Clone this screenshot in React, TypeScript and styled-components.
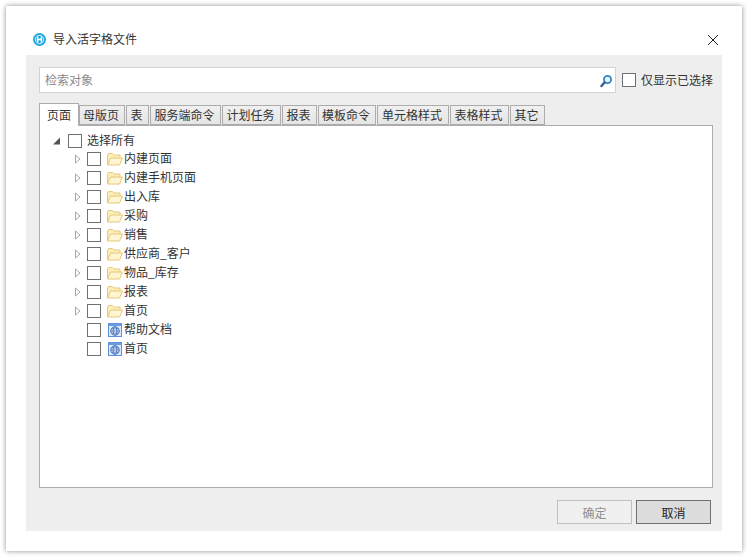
import React from 'react'
import styled, { createGlobalStyle } from 'styled-components'

const Global = createGlobalStyle`
  html, body {
    margin: 0;
    padding: 0;
    background: #fff;
  }
  body {
    font-family: "Noto Sans CJK SC", "Liberation Sans", sans-serif;
    font-size: 12px;
    color: #333;
  }
`
const Page = styled.div`
  width: 748px;
  height: 557px;
  padding: 6px;
  box-sizing: border-box;
  overflow: hidden;
`
const Dialog = styled.div`
  width: 736px;
  height: 545px;
  background: #fff;
  box-shadow: 0 0 5px rgba(0, 0, 0, 0.45);
  padding: 0 20px 20px;
  box-sizing: border-box;
  display: flex;
  flex-direction: column;
`
const TitleBar = styled.div`
  height: 49px;
  display: flex;
  align-items: center;
  padding: 18px 0 0 7px;
  box-sizing: border-box;
`
const Title = styled.div`
  margin: 0 0 2px 7px;
  line-height: 16px;
`
const Close = styled.div`
  margin-left: auto;
  margin-right: 3px;
  width: 12px;
  height: 12px;
  display: flex;
`
const Panel = styled.div`
  flex: 1;
  background: #eeeeee;
  padding: 12px 9px 7px 13px;
  display: flex;
  flex-direction: column;
`
const SearchRow = styled.div`
  display: flex;
  align-items: center;
  height: 26px;
`
const Search = styled.div`
  width: 577px;
  height: 26px;
  box-sizing: border-box;
  background: #fff;
  border: 1px solid #cfd3d3;
  display: flex;
  align-items: center;
  padding: 0 1px 0 5px;
  color: #8a8a8a;
`
const SearchIcon = styled.div`
  margin-left: auto;
  width: 15px;
  height: 15px;
  display: flex;
`
const Box = styled.div<{ $gap?: number }>`
  width: 14px;
  height: 14px;
  box-sizing: border-box;
  background: #fff;
  border: 1px solid #707070;
  flex: none;
  margin-right: ${(p) => p.$gap ?? 0}px;
`
const Label = styled.span`
  margin-bottom: 2px;
`
const OnlySelected = styled.div`
  display: flex;
  align-items: center;
  margin-left: 6px;
`
const Tabs = styled.div`
  display: flex;
  height: 20px;
  margin-top: 12px;
  align-items: flex-end;
  position: relative;
  z-index: 1;
`
const Tab = styled.div<{ $w: number; $active?: boolean }>`
  width: ${(p) => p.$w}px;
  height: ${(p) => (p.$active ? 23 : 20)}px;
  margin-bottom: ${(p) => (p.$active ? -1 : 0)}px;
  margin-right: ${(p) => (p.$active ? 0 : 1)}px;
  padding-right: ${(p) => (p.$active ? 0 : 2)}px;
  box-sizing: border-box;
  border: 1px solid #acacac;
  border-bottom: ${(p) => (p.$active ? 'none' : '1px solid #acacac')};
  background: ${(p) => (p.$active ? '#fff' : 'linear-gradient(#f0f0f0, #e5e5e5)')};
  text-align: center;
  line-height: ${(p) => (p.$active ? 21 : 18)}px;
  color: #333;
`
const TreeBox = styled.div`
  width: 674px;
  height: 363px;
  box-sizing: border-box;
  background: #fff;
  border: 1px solid #acacac;
  padding: 5px 0 0 12px;
`
const Children = styled.div`
  margin-top: -1px;
`
const Row = styled.div<{ $level: number }>`
  height: 19px;
  display: flex;
  align-items: center;
  padding-left: ${(p) => p.$level * 19}px;
`
const Arrow = styled.div`
  width: 16px;
  flex: none;
  display: flex;
  padding-left: 1px;
  box-sizing: border-box;
`
const Icon = styled.div`
  width: 16px;
  height: 16px;
  margin: 0 1px 0 6px;
  flex: none;
  display: flex;
`
const Footer = styled.div`
  margin-top: 12px;
  display: flex;
  justify-content: flex-end;
  gap: 4px;
  padding-right: 2px;
`
const Button = styled.div<{ $disabled?: boolean }>`
  width: 75px;
  height: 24px;
  box-sizing: border-box;
  text-align: center;
  line-height: 23px;
  border: 1px solid ${(p) => (p.$disabled ? '#bfbfbf' : '#707070')};
  background: ${(p) => (p.$disabled ? '#f0f0f0' : '#dcdcdc')};
  color: ${(p) => (p.$disabled ? '#8f8f8f' : '#222')};
`

const FolderIcon = () => (
  <svg width="16" height="16" viewBox="0 0 16 16">
    <path d="M0.5 14V4L1.5 2.5H5.5L7 4H13V7" fill="#fdeeb8" stroke="#e6c878" />
    <path d="M0.5 14L3.5 7H15.5L12.5 14Z" fill="#fff5d2" stroke="#e6c878" />
  </svg>
)

const PageIcon = () => (
  <svg width="16" height="16" viewBox="0 0 16 16">
    <rect x="1.5" y="1.5" width="13" height="13" fill="#dce9fb" stroke="#5f90de" />
    <rect x="2" y="2" width="12" height="2" fill="#6c9be2" />
    <circle cx="8" cy="9" r="4.2" fill="#f4f8fe" stroke="#3b68b5" />
    <ellipse cx="8" cy="9" rx="1.9" ry="4.2" fill="none" stroke="#3b68b5" strokeWidth="0.8" />
    <path d="M3.8 9H12.2M4.6 6.9H11.4M4.6 11.1H11.4" stroke="#3b68b5" strokeWidth="0.8" fill="none" />
  </svg>
)

const OpenArrow = () => (
  <svg width="8" height="8" viewBox="0 0 8 8">
    <path d="M0 7.5H7V0.5Z" fill="#555" />
  </svg>
)

const ClosedArrow = () => (
  <svg width="9" height="10" viewBox="0 0 9 10">
    <path d="M3.5 1L8 5L3.5 9Z" fill="#fff" stroke="#a6a6a6" />
  </svg>
)

const tabs = [
  { name: '页面', w: 40, active: true },
  { name: '母版页', w: 46 },
  { name: '表', w: 23 },
  { name: '服务端命令', w: 71 },
  { name: '计划任务', w: 59 },
  { name: '报表', w: 35 },
  { name: '模板命令', w: 58 },
  { name: '单元格样式', w: 72 },
  { name: '表格样式', w: 59 },
  { name: '其它', w: 35 },
]
const folders = ['内建页面', '内建手机页面', '出入库', '采购', '销售', '供应商_客户', '物品_库存', '报表', '首页']
const pages = ['帮助文档', '首页']

const App = () => {
  return (
    <Page>
      <Global />
      <Dialog>
        <TitleBar>
          <svg width="13" height="13" viewBox="0 0 13 13">
            <circle cx="6.5" cy="6.5" r="6.5" fill="#1ea6e0" />
            <circle cx="6.5" cy="6.5" r="4.2" fill="none" stroke="#fff" strokeWidth="0.8" />
            <path d="M4.6 3.5V9.5M8.4 3.5V9.5M4.6 6.5H8.4" stroke="#fff" strokeWidth="1.5" fill="none" />
          </svg>
          <Title>导入活字格文件</Title>
          <Close>
            <svg width="12" height="12" viewBox="0 0 12 12">
              <path d="M1 1L11 11M11 1L1 11" stroke="#222" strokeWidth="1" fill="none" />
            </svg>
          </Close>
        </TitleBar>
        <Panel>
          <SearchRow>
            <Search>
              <Label>检索对象</Label>
              <SearchIcon>
                <svg width="15" height="15" viewBox="0 0 15 15">
                  <circle cx="8.5" cy="6.5" r="3.6" fill="#eaf4fb" stroke="#2f86c4" strokeWidth="1.8" />
                  <path d="M5.5 9.5L2.5 13" stroke="#3a5f96" strokeWidth="2.4" strokeLinecap="round" />
                </svg>
              </SearchIcon>
            </Search>
            <OnlySelected>
              <Box $gap={5} />
              <Label>仅显示已选择</Label>
            </OnlySelected>
          </SearchRow>
          <Tabs>
            {tabs.map((tab) => (
              <Tab key={tab.name} $w={tab.w} $active={tab.active}>
                {tab.name}
              </Tab>
            ))}
          </Tabs>
          <TreeBox>
            <Row $level={0}>
              <Arrow>
                <OpenArrow />
              </Arrow>
              <Box $gap={5} />
              <Label>选择所有</Label>
            </Row>
            <Children>
              {folders.map((name) => (
                <Row key={name} $level={1}>
                  <Arrow>
                    <ClosedArrow />
                  </Arrow>
                  <Box />
                  <Icon>
                    <FolderIcon />
                  </Icon>
                  <Label>{name}</Label>
                </Row>
              ))}
              {pages.map((name) => (
                <Row key={name} $level={1}>
                  <Arrow />
                  <Box />
                  <Icon>
                    <PageIcon />
                  </Icon>
                  <Label>{name}</Label>
                </Row>
              ))}
            </Children>
          </TreeBox>
          <Footer>
            <Button $disabled>确定</Button>
            <Button>取消</Button>
          </Footer>
        </Panel>
      </Dialog>
    </Page>
  )
}

export default App
